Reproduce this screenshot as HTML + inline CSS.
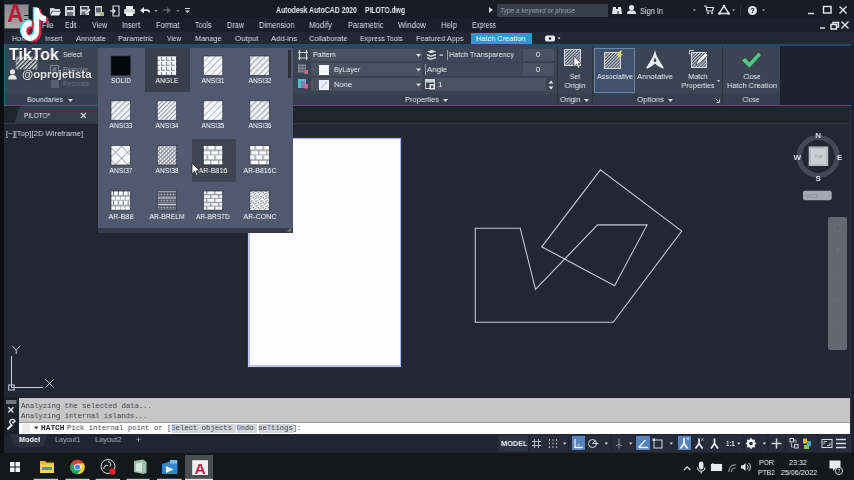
<!DOCTYPE html>
<html><head><meta charset="utf-8">
<style>
*{box-sizing:border-box;margin:0;padding:0}
html,body{width:854px;height:480px;overflow:hidden;background:#212733;font-family:"Liberation Sans",sans-serif;color:#dfe3ea}
body{position:relative}
.abs,.t,.c{position:absolute}
.t,.c{will-change:transform}
.t{white-space:nowrap;font-size:8px;line-height:10px;color:#d9dee7;height:10px}
.c{white-space:nowrap;font-size:8px;line-height:10px;color:#d9dee7;height:10px;transform:translateX(-50%);text-align:center}
#title{left:0;top:0;width:854px;height:18px;background:#181c25}
#menu{left:0;top:18px;width:854px;height:14px;background:#1b1f2a}
#tabs{left:0;top:32px;width:854px;height:13px;background:#222733}
#ribbon{left:0;top:45px;width:854px;height:61px;background:#1e222d}
.panel{position:absolute;top:46px;height:59px;background:#3b4453}
.ptitle{position:absolute;left:0;right:0;bottom:0;height:11px;background:#35404f}
#blueline{left:0;top:105px;width:854px;height:1px;background:#2d7ea6}
#filetabs{left:0;top:106px;width:854px;height:18px;background:#1f242d}
#draw{left:0;top:124px;width:854px;height:274px;background:#222733}
#cmd{left:0;top:397px;width:854px;height:37px;background:#1b2029}
#status{left:0;top:434px;width:854px;height:21px;background:#212532}
#task{left:0;top:452.500px;width:854px;height:27.500px;background:#131819}
.dd{position:absolute;height:12px;background:#4a5262}
.mono{font-family:"Liberation Mono",monospace}
</style></head><body>
<div id="title" class="abs"></div>
<div id="menu" class="abs"></div>
<div id="tabs" class="abs"></div>
<div id="ribbon" class="abs"></div>
<div id="filetabs" class="abs"></div>
<div id="draw" class="abs"></div>
<div id="cmd" class="abs"></div>
<div id="status" class="abs"></div>
<div id="task" class="abs"></div>
<!-- title bar -->
<div class="abs" style="left:0;top:0;width:3.500px;height:124px;background:#0c0e13"></div>
<div class="abs" style="left:4px;top:4px;width:25px;height:25px;background:linear-gradient(#87898c,#a8aaab);border:1px solid #55585d"></div>
<div class="t" style="transform:scaleX(0.913);transform-origin:0 50%;left:7.300px;top:0;height:26px;font-size:25px;line-height:26px;font-weight:bold;color:#b81d2e">A</div>
<svg class="abs" style="left:24px;top:14px" width="5" height="8" viewBox="0 0 5 8"><path d="M0 5h5L2.5 8z" fill="#222"/><rect x="0" y="1" width="5" height="1" fill="#222"/></svg>
<!-- quick access icons -->
<svg class="abs" style="left:48px;top:4px" width="150" height="14" viewBox="48 4 150 14">
 <g fill="#cfd3da">
  <path d="M50 8h4l1 1h5v2h-8l-2 4z"/><path d="M52.500 11.500h8.500l-2 4h-8.500z" fill="#e9ecf0"/>
  <path d="M65 6h10v10h-10z"/><rect x="67" y="7" width="6" height="3" fill="#3a404c"/><rect x="67" y="12" width="6" height="4" fill="#6c7280"/>
  <path d="M80 6h9v9h-9z"/><rect x="81.500" y="7" width="6" height="2.500" fill="#3a404c"/><rect x="81.500" y="11.500" width="4" height="3.500" fill="#6c7280"/><path d="M84.500 14.500l.6-2.200 4-4 1.600 1.600-4 4z" fill="#f1f3f6" stroke="#191d27" stroke-width=".5"/>
  <path d="M95 6h7v10h-7z"/><rect x="96" y="7.500" width="5" height="5" fill="#586070"/><path d="M100 12h4v4h-4z" fill="#a9b87a"/>
  <path d="M113 6h6v10h-6z" fill="none" stroke="#cfd3da" stroke-width="1.200"/><path d="M110 11h5m-2-2l2 2-2 2" stroke="#e8ebef" stroke-width="1.200" fill="none"/>
  <rect x="124" y="9" width="11" height="5" rx="1"/><rect x="126" y="6" width="7" height="3" fill="#e9ecf0"/><rect x="126" y="12.500" width="7" height="3.500" fill="#f4f5f7"/>
  <path d="M140 10.500l4-3.500v2.300h3c2 0 3 1.200 3 3.200h-1.500c0-1-.6-1.600-1.700-1.600H144v2.700z" fill="#e4e7ec"/>
  <path d="M154.500 10h3l-1.500 2z" fill="#aeb3bd"/>
  <path d="M171 10.500l-4-3.500v2.300h-3c-1 0-1.500.5-1.500 1.200h4.500v3z" fill="#5b6270"/>
  <path d="M176.500 10h3l-1.500 2z" fill="#7b818d"/>
  <rect x="185" y="8" width="5" height="1"/><path d="M185 10.500h5l-2.500 2.500z"/>
 </g>
</svg>
<div class="t" style="transform:scaleX(0.811);transform-origin:0 50%;left:276px;top:5px;font-size:8.500px;color:#e6e9ee;font-weight:bold">Autodesk AutoCAD 2020</div>
<div class="t" style="transform:scaleX(0.787);transform-origin:0 50%;left:365px;top:5px;font-size:8.500px;color:#e6e9ee;font-weight:bold">PILOTO.dwg</div>
<svg class="abs" style="left:489px;top:7px" width="4" height="6"><path d="M0 0l4 3-4 3z" fill="#d0d4db"/></svg>
<div class="abs" style="left:497px;top:4px;width:111px;height:13px;background:#373e4c"></div>
<div class="t" style="transform:scaleX(0.871);transform-origin:0 50%;left:500px;top:5.500px;font-size:7.500px;font-style:italic;color:#9aa0ac">Type a keyword or phrase</div>
<svg class="abs" style="left:610px;top:3px" width="160" height="14" viewBox="610 3 160 14">
 <g fill="#dfe3e9">
  <path d="M613 7h3v2h2V7h3l1 7h-3.500v-3h-1v3H612z"/>
  <circle cx="631.500" cy="7.500" r="2.600"/><path d="M627 14c0-3 2-3.800 4.500-3.800s4.500.8 4.500 3.800z"/>
  <path d="M693 9.500h3l-1.500 1.800z" fill="#b0b5bf"/>
  <path d="M704 6h2l1 5h5.500l1-3.500H707" fill="none" stroke="#dfe3e9" stroke-width="1.200"/><circle cx="708" cy="13" r="1"/><circle cx="712" cy="13" r="1"/>
  <path d="M724 6l5 7.500h-10z" fill="none" stroke="#dfe3e9" stroke-width="1.400"/><circle cx="724" cy="6" r="1.300"/><circle cx="719.500" cy="13.500" r="1.300"/><circle cx="728.500" cy="13.500" r="1.300"/>
  <path d="M732 9.500h3l-1.500 1.800z" fill="#b0b5bf"/>
  <rect x="740" y="5" width="1" height="11" fill="#2c323e"/>
  <circle cx="752.500" cy="10.500" r="4.500"/>
  <path d="M762 9.500h3l-1.500 1.800z" fill="#b0b5bf"/>
 </g>
 <text x="752.500" y="13.200" font-size="7.500" font-weight="bold" text-anchor="middle" fill="#12151c" font-family="Liberation Sans, sans-serif">?</text>
</svg>
<div class="t" style="transform:scaleX(0.869);transform-origin:0 50%;left:640px;top:5.500px;font-size:8.500px;color:#e2e5ea">Sign In</div>
<svg class="abs" style="left:805px;top:3px" width="49" height="28" viewBox="805 3 49 28">
 <g stroke="#e4e7ec" stroke-width="1.400" fill="none">
  <path d="M808 13.500h6"/><rect x="823.500" y="6.500" width="7.500" height="6.500"/><path d="M839.500 6.500l7 7m0-7l-7 7"/>
  <path d="M820 28h5"/><path d="M831 24.500h5.500v4.500h-5.500zM833 24.500v-2h5.500v4.500h-2"/><path d="M841.500 21.500l7 7m0-7l-7 7"/>
 </g>
</svg>
<!-- menu bar -->
<div class="t" style="transform:scaleX(0.839);transform-origin:0 50%;left:42.0px;top:20px;font-size:8.500px">File</div>
<div class="t" style="transform:scaleX(0.785);transform-origin:0 50%;left:64.5px;top:20px;font-size:8.500px">Edit</div>
<div class="t" style="transform:scaleX(0.821);transform-origin:0 50%;left:92.0px;top:20px;font-size:8.500px">View</div>
<div class="t" style="transform:scaleX(0.846);transform-origin:0 50%;left:122.0px;top:20px;font-size:8.500px">Insert</div>
<div class="t" style="transform:scaleX(0.873);transform-origin:0 50%;left:155.5px;top:20px;font-size:8.500px">Format</div>
<div class="t" style="transform:scaleX(0.831);transform-origin:0 50%;left:194.5px;top:20px;font-size:8.500px">Tools</div>
<div class="t" style="transform:scaleX(0.857);transform-origin:0 50%;left:227.0px;top:20px;font-size:8.500px">Draw</div>
<div class="t" style="transform:scaleX(0.884);transform-origin:0 50%;left:258.5px;top:20px;font-size:8.500px">Dimension</div>
<div class="t" style="transform:scaleX(0.918);transform-origin:0 50%;left:309.0px;top:20px;font-size:8.500px">Modify</div>
<div class="t" style="transform:scaleX(0.864);transform-origin:0 50%;left:347.5px;top:20px;font-size:8.500px">Parametric</div>
<div class="t" style="transform:scaleX(0.926);transform-origin:0 50%;left:398.0px;top:20px;font-size:8.500px">Window</div>
<div class="t" style="transform:scaleX(0.915);transform-origin:0 50%;left:441.0px;top:20px;font-size:8.500px">Help</div>
<div class="t" style="transform:scaleX(0.781);transform-origin:0 50%;left:472.0px;top:20px;font-size:8.500px">Express</div>
<!-- ribbon tabs -->
<div class="t" style="transform:scaleX(0.890);transform-origin:0 50%;left:12.0px;top:33.500px">Home</div>
<div class="t" style="transform:scaleX(0.874);transform-origin:0 50%;left:45.0px;top:33.500px">Insert</div>
<div class="t" style="transform:scaleX(0.937);transform-origin:0 50%;left:76.0px;top:33.500px">Annotate</div>
<div class="t" style="transform:scaleX(0.905);transform-origin:0 50%;left:118.0px;top:33.500px">Parametric</div>
<div class="t" style="transform:scaleX(0.814);transform-origin:0 50%;left:167.0px;top:33.500px">View</div>
<div class="t" style="transform:scaleX(0.916);transform-origin:0 50%;left:194.5px;top:33.500px">Manage</div>
<div class="t" style="transform:scaleX(0.979);transform-origin:0 50%;left:234.5px;top:33.500px">Output</div>
<div class="t" style="transform:scaleX(0.959);transform-origin:0 50%;left:271.0px;top:33.500px">Add-ins</div>
<div class="t" style="transform:scaleX(0.941);transform-origin:0 50%;left:309.0px;top:33.500px">Collaborate</div>
<div class="t" style="transform:scaleX(0.856);transform-origin:0 50%;left:360.0px;top:33.500px">Express Tools</div>
<div class="t" style="transform:scaleX(0.913);transform-origin:0 50%;left:415.5px;top:33.500px">Featured Apps</div>
<div class="abs" style="left:471px;top:33px;width:61px;height:12px;background:#2b99d4"></div>
<div class="t" style="transform:scaleX(0.928);transform-origin:0 50%;left:475.500px;top:33.500px;color:#fff">Hatch Creation</div>
<svg class="abs" style="left:545px;top:35px" width="18" height="8"><rect x="0" y="0.500" width="10" height="6" rx="2" fill="#e8ebef"/><circle cx="5" cy="3.500" r="1.300" fill="#1f2531"/><path d="M12.500 2.500h3l-1.500 2z" fill="#d0d4db"/></svg>

<!-- ribbon teal top line -->
<div class="abs" style="left:4px;top:44px;width:847px;height:1.600px;background:#1f4d65"></div>
<div class="abs" style="left:4px;top:46px;width:775.500px;height:59px;background:#2c3441"></div>
<!-- Boundaries panel -->
<div class="panel" style="left:4px;width:94px"><div class="ptitle"></div></div>
<div class="abs" style="left:4px;top:45px;width:1px;height:61px;background:#2a6680"></div>
<svg class="abs" style="left:14px;top:54.500px" width="26" height="16" viewBox="0 0 26 16">
 <defs><pattern id="hp1" width="3" height="3" patternUnits="userSpaceOnUse" patternTransform="rotate(45)"><rect width="3" height="3" fill="#cfd3da"/><rect width="1.300" height="3" fill="#2b303a"/></pattern></defs>
 <rect x="2" y="2" width="21" height="12" fill="url(#hp1)"/><rect x="2" y="2" width="21" height="12" fill="none" stroke="#8b919c" stroke-dasharray="2 1"/>
</svg>
<div class="t" style="transform:scaleX(0.855);transform-origin:0 50%;left:62.500px;top:50px;color:#e8ebf0">Select</div>

<svg class="abs" style="left:49px;top:64px" width="12" height="26" viewBox="0 0 12 26"><rect x="1.500" y="1.500" width="8" height="8" fill="none" stroke="#7f8693"/><rect x="3.500" y="3.500" width="4" height="4" fill="#6d7481"/><rect x="2" y="16" width="8" height="8" fill="#596070"/></svg>
<div class="t" style="transform:scaleX(0.839);transform-origin:0 50%;left:62.500px;top:65px;color:#8e95a2">Remove</div>
<div class="t" style="transform:scaleX(0.832);transform-origin:0 50%;left:62.500px;top:79px;color:#6a7180">Recreate</div>
<div class="t" style="transform:scaleX(0.889);transform-origin:0 50%;left:27px;top:95px;color:#dfe3ea">Boundaries</div>
<svg class="abs" style="left:67.500px;top:98.500px" width="5" height="3"><path d="M0 0h5L2.500 3z" fill="#d5d9e0"/></svg>
<!-- Pattern panel (mostly hidden by dropdown) -->
<div class="panel" style="left:99px;width:193px"><div class="ptitle"></div></div>
<!-- Properties panel -->
<div class="panel" style="left:293px;width:264px"><div class="ptitle"></div></div>
<svg class="abs" style="left:297px;top:49px" width="12" height="42" viewBox="0 0 12 42">
 <path d="M2.500 1v10M9.500 1v10M1 3.500h10M1 9h10" stroke="#d4d8df" stroke-width="1.200" fill="none"/>
 <rect x="1" y="15.500" width="8" height="8" fill="#8e949f"/><path d="M1 18h8M1 21h8M4 15.500v8M7 15.500v8" stroke="#4b5160" stroke-width=".8"/><rect x="7.500" y="21" width="3.500" height="4" fill="#c76a86"/>
 <rect x="1" y="30" width="8" height="9" fill="#5fb7cc"/><rect x="4" y="32" width="4" height="7" fill="#8a7ab8"/><rect x="7.500" y="35" width="3.500" height="4.500" fill="#c76a86"/>
</svg>
<div class="dd" style="left:311px;top:49px;width:111px"></div>
<div class="dd" style="left:311px;top:63px;width:111px;height:13px"></div>
<div class="dd" style="left:311px;top:78px;width:111px;height:13px"></div>
<div class="t" style="transform:scaleX(0.892);transform-origin:0 50%;left:313px;top:50px;color:#e8ebf0">Pattern</div>
<div class="abs" style="left:318.500px;top:65px;width:10px;height:10px;background:#f4f6fb"></div>
<div class="abs" style="left:318.500px;top:80px;width:10px;height:10px;background:#eceef8"></div>
<svg class="abs" style="left:318.500px;top:80px" width="10" height="10"><path d="M2 8l6-6" stroke="#c9cde6" stroke-width="1.200"/></svg>
<div class="t" style="transform:scaleX(0.886);transform-origin:0 50%;left:334px;top:64.500px;color:#e8ebf0">ByLayer</div>
<div class="t" style="transform:scaleX(0.941);transform-origin:0 50%;left:334px;top:79.500px;color:#e8ebf0">None</div>
<svg class="abs" style="left:415px;top:49px" width="8" height="42" viewBox="0 0 8 42"><g fill="#d9dde4"><path d="M1 5h5L3.500 8z"/><path d="M1 19.500h5L3.500 22.500z"/><path d="M1 34.500h5L3.500 37.500z"/></g></svg>
<!-- right half of properties -->
<svg class="abs" style="left:425px;top:49px" width="20" height="12" viewBox="0 0 20 12"><g fill="#dfe3e9"><path d="M2 2.500l5-1.500 4 1.500-5 1.800z"/><path d="M2 5l4 1.500 5-1.800v1.500l-5 1.800-4-1.500z"/><path d="M2 8l4 1.500 5-1.800v1.500l-5 1.800-4-1.500z"/><rect x="14.500" y="5.500" width="3.500" height="1.200"/></g></svg>
<div class="dd" style="left:446.500px;top:49px;width:75px;background:#3f4858"></div>
<div class="dd" style="left:523px;top:49px;width:31px"></div>
<div class="abs" style="left:446.500px;top:50px;width:1px;height:10px;background:#9aa1ad"></div>
<div class="t" style="transform:scaleX(0.908);transform-origin:0 50%;left:449px;top:50px;color:#e8ebf0">Hatch Transparency</div>
<div class="c" style="left:538px;top:50px;color:#e8ebf0">0</div>
<div class="dd" style="left:424.500px;top:63px;width:97px;height:13px;background:#3f4858"></div>
<div class="dd" style="left:523px;top:63px;width:31px;height:13px"></div>
<div class="abs" style="left:424.500px;top:64px;width:1px;height:11px;background:#9aa1ad"></div>
<div class="t" style="transform:scaleX(0.977);transform-origin:0 50%;left:427px;top:64.500px;color:#e8ebf0">Angle</div>
<div class="c" style="left:538px;top:64.500px;color:#e8ebf0">0</div>
<div class="dd" style="left:435px;top:78px;width:111px;height:13px"></div>
<svg class="abs" style="left:424.500px;top:79px" width="11" height="11" viewBox="0 0 11 11"><rect x=".5" y=".5" width="9" height="9" fill="none" stroke="#cfd3da"/><rect x="1" y="1" width="8" height="2.500" fill="#cfd3da"/><rect x="4.500" y="5" width="5.500" height="5.500" fill="#e9ecf0"/><rect x="6" y="6.500" width="2.500" height="2.500" fill="#4a5262"/></svg>
<div class="t" style="left:438px;top:79.500px;color:#e8ebf0">1</div>
<svg class="abs" style="left:548px;top:79px" width="6" height="12" viewBox="0 0 6 12"><path d="M.5 4.500h5L3 1.500zM.5 7.500h5L3 10.500z" fill="#e3e6eb"/></svg>
<div class="t" style="transform:scaleX(0.932);transform-origin:0 50%;left:405px;top:95px;color:#dfe3ea">Properties</div>
<svg class="abs" style="left:442.500px;top:98.500px" width="5" height="3"><path d="M0 0h5L2.500 3z" fill="#d5d9e0"/></svg>
<!-- Origin panel -->
<div class="panel" style="left:558px;width:33.500px"><div class="ptitle"></div></div>
<svg class="abs" style="left:563px;top:48px" width="22" height="22" viewBox="0 0 22 22">
 <defs><pattern id="hp2" width="2.200" height="2.200" patternUnits="userSpaceOnUse" patternTransform="rotate(45)"><rect width="2.200" height="2.200" fill="#4a5261"/><rect width="1.100" height="2.200" fill="#c3c8d0"/></pattern></defs>
 <rect x="1.500" y="1.500" width="16" height="16" fill="url(#hp2)" stroke="#d4d8df"/>
 <path d="M11 8.500v10l2.500-2.300 1.800 4 1.700-.8-1.800-3.800 3.300-.2z" fill="#fff" stroke="#2a2f3a" stroke-width=".6"/>
</svg>
<div class="c" style="transform:translateX(-50%) scaleX(0.874);left:574.500px;top:71.500px;color:#e8ebf0">Set</div>
<div class="c" style="transform:translateX(-50%) scaleX(0.984);left:574.500px;top:81px;color:#e8ebf0">Origin</div>
<div class="t" style="transform:scaleX(0.960);transform-origin:0 50%;left:559.500px;top:95px;color:#dfe3ea">Origin</div>
<svg class="abs" style="left:584px;top:98.500px" width="5" height="3"><path d="M0 0h5L2.500 3z" fill="#d5d9e0"/></svg>
<!-- Options panel -->
<div class="panel" style="left:592.500px;width:129.500px"><div class="ptitle"></div></div>
<div class="abs" style="left:594px;top:47.500px;width:41px;height:45px;background:#42526c;border:1px solid #6985a8"></div>
<svg class="abs" style="left:603px;top:49.500px" width="24" height="22" viewBox="0 0 24 22">
 <rect x="1.500" y="2.500" width="16" height="16" fill="url(#hp2)" stroke="#d4d8df"/>
 <path d="M17.500 .5l-4.500 5h2.800l-2.300 4 6.500-5.500h-3l2.500-3.500z" fill="#dbe65a"/>
</svg>
<div class="c" style="transform:translateX(-50%) scaleX(0.890);left:614.500px;top:71.500px;color:#e8ebf0">Associative</div>
<svg class="abs" style="left:644px;top:48px" width="22" height="22" viewBox="0 0 22 22"><path d="M11 2c.8 3.500 1.800 6 3.300 8.700 1.500 2.700 3.300 5.500 5.400 8.800l-.6 1.200c-3-1.200-5.600-2.800-8.100-5.200-2.500 2.400-5.100 4-8.100 5.200l-.6-1.200c2.100-3.300 3.900-6.100 5.400-8.800C9.200 8 10.200 5.500 11 2z" fill="#e9ecf0"/><path d="M11 9.500l1.600 3.300-1.600 1.700-1.600-1.700z" fill="#3b4453"/></svg>
<div class="c" style="transform:translateX(-50%) scaleX(0.952);left:655px;top:71.500px;color:#e8ebf0">Annotative</div>
<svg class="abs" style="left:687.500px;top:49px" width="22" height="22" viewBox="0 0 22 22">
 <rect x="3.500" y="3.500" width="15" height="15" fill="url(#hp2)" stroke="#d4d8df"/>
 <path d="M1.500 1.500v4M1.500 1.500h4" stroke="#d4d8df" fill="none"/>
 <path d="M8 16l2-5 7.500-7.500 2.500 2.500-7.500 7.500z" fill="#f1f2f5" stroke="#3b4453" stroke-width=".7"/>
</svg>
<div class="c" style="transform:translateX(-50%) scaleX(0.895);left:698px;top:71.500px;color:#e8ebf0">Match</div>
<div class="c" style="transform:translateX(-50%) scaleX(0.905);left:698px;top:81px;color:#e8ebf0">Properties</div>
<svg class="abs" style="left:716.500px;top:80px" width="3" height="3"><path d="M0 0h3L1.500 2z" fill="#d5d9e0"/></svg>
<div class="t" style="transform:scaleX(0.979);transform-origin:0 50%;left:637px;top:95px;color:#dfe3ea">Options</div>
<svg class="abs" style="left:667.500px;top:98.500px" width="5" height="3"><path d="M0 0h5L2.500 3z" fill="#d5d9e0"/></svg>
<svg class="abs" style="left:715px;top:97.500px" width="5" height="5"><path d="M.5 .5l3 3M4.500 1.500v3h-3" stroke="#c9cdd5" fill="none" stroke-width=".9"/></svg>
<!-- Close panel -->
<div class="panel" style="left:723px;width:56.500px"><div class="ptitle"></div></div>
<svg class="abs" style="left:740px;top:51px" width="23" height="18" viewBox="0 0 23 18"><path d="M2 9.500l3-2.500 4.500 4.500L18.500 1.500l2.500 2.500-11.500 12.500z" fill="#52cc83"/></svg>
<div class="c" style="transform:translateX(-50%) scaleX(0.831);left:751.500px;top:71.500px;color:#e8ebf0">Close</div>
<div class="c" style="transform:translateX(-50%) scaleX(0.937);left:751.500px;top:81px;color:#e8ebf0">Hatch Creation</div>
<div class="c" style="transform:translateX(-50%) scaleX(0.831);left:751px;top:95px;color:#dfe3ea">Close</div>
<!-- bright line under ribbon -->
<div class="abs" style="left:4px;top:105px;width:847px;height:1.200px;background:#286488"></div>
<!-- file tab -->
<svg class="abs" style="left:4px;top:106px;width:94px;height:18px" viewBox="0 0 94 18"><path d="M9 18c4 0 4-18 9-18h76v18z" fill="#353c4a"/></svg>
<div class="t" style="transform:scaleX(0.805);transform-origin:0 50%;left:24px;top:110.500px;color:#e3e6eb">PILOTO*</div>
<svg class="abs" style="left:80px;top:112px" width="7" height="7"><path d="M1 1l5 5M6 1l-5 5" stroke="#d5d9e0" stroke-width="1.100"/></svg>
<div class="abs" style="left:3.500px;top:123px;width:847px;height:1.300px;background:#323844"></div>

<!-- drawing area -->
<div class="abs" style="left:0;top:124px;width:3.500px;height:273px;background:#0c0e13"></div>
<div class="abs" style="left:849.500px;top:106px;width:4.500px;height:346.500px;background:#1d222c;border-left:1px solid #2c323e"></div>
<div class="t" style="transform:scaleX(0.960);transform-origin:0 50%;left:6px;top:128.500px;color:#d5d9e0">[−][Top][2D Wireframe]</div>
<!-- white rect -->
<div class="abs" style="left:247.500px;top:138px;width:153px;height:228.500px;background:#fdfdff;border:1.200px solid #a9b5ea;border-left:2.500px solid #c0c9f1;border-bottom:2px solid #bcc8e6;box-shadow:0 0 0 .6px #343a78"></div>
<svg class="abs" style="left:0;top:124px" width="854" height="273" viewBox="0 124 854 273">
 <path d="M475.300 228.200H520.200L535.500 289.500L597.500 224.900H647.100L614.600 285.800L541.700 246.800L600.400 169.800L681.700 231.100L613.200 322.300H475.300Z" fill="none" stroke="#c3c7ce" stroke-width="1.100" stroke-linejoin="miter"/>
 <!-- UCS icon -->
 <g stroke="#c9cdd4" stroke-width="1" fill="none">
  <path d="M11.500 387.500V356M11.500 387.500H43"/><rect x="8.700" y="385" width="5.500" height="5"/>
  <path d="M45.500 379.300l8.200 8.200M53.700 379.300l-8.200 8.200"/>
  <path d="M12.200 345.700l4 4.500 4.100-4.500M16.200 350.200V354"/>
 </g>
 <!-- view cube -->
 <circle cx="818.200" cy="156.400" r="19" fill="none" stroke="#434955" stroke-width="5"/>
 <rect x="808.700" y="146.500" width="19.500" height="19.500" fill="#b9bcc3"/>
 <rect x="811" y="149" width="15" height="15" fill="#cbced4"/>
 <text x="818.500" y="158.200" font-size="4" text-anchor="middle" fill="#8a8e96" font-family="Liberation Sans, sans-serif">TOP</text>
 <g font-size="8" font-weight="bold" text-anchor="middle" fill="#dcdfe4" font-family="Liberation Sans, sans-serif">
  <text x="818.200" y="138">N</text><text x="818.200" y="180.600">S</text><text x="797.300" y="159.500">W</text><text x="839.600" y="159.500">E</text>
 </g>
 <rect x="803" y="190.800" width="28.700" height="9.500" rx="2" fill="#a3a7ae"/>
 <text x="812" y="198" font-size="5" text-anchor="middle" fill="#858991" font-family="Liberation Sans, sans-serif">WCS</text>
 <rect x="828" y="217" width="19" height="133" rx="2" fill="#63676f"/>
 <g stroke="#6b6f78" stroke-width="1" fill="none"><circle cx="837.500" cy="228" r="4"/><path d="M835 250l5 0M837.500 247v6M834 275h7M834 300h7M835 325h5"/></g>
</svg>

<!-- hatch pattern gallery dropdown -->
<div class="abs" style="left:97.500px;top:48px;width:195.500px;height:185.300px;background:#363c49"></div><div class="abs" style="left:97.500px;top:48px;width:195.500px;height:179.500px;background:#515970"></div>
<div class="abs" style="left:145px;top:48px;width:44.500px;height:43.700px;background:#3a3f4d"></div>
<div class="abs" style="left:192px;top:138.500px;width:43.500px;height:43.500px;background:#3e4452"></div>
<div class="abs" style="left:288px;top:49.500px;width:3px;height:28px;background:#2a2f3a"></div>
<svg class="abs" style="left:98px;top:47px" width="195" height="186" viewBox="98 47 195 186">
 <defs>
  <pattern id="p31" width="4.800" height="4.800" patternUnits="userSpaceOnUse" patternTransform="rotate(45)"><rect width="4.800" height="4.800" fill="#f6f7fb"/><rect width=".6" height="4.800" fill="#8a909c"/></pattern>
  <pattern id="p32" width="4.200" height="4.200" patternUnits="userSpaceOnUse" patternTransform="rotate(45)"><rect width="4.200" height="4.200" fill="#f1f3f7"/><rect width=".6" height="4.200" fill="#858b98"/><rect x="1.300" width=".5" height="4.200" fill="#b3b8c2"/></pattern>
  <pattern id="p34" width="3" height="3" patternUnits="userSpaceOnUse" patternTransform="rotate(45)"><rect width="3" height="3" fill="#eef0f4"/><rect width=".8" height="3" fill="#7f8693"/></pattern>
  <pattern id="p37" width="8.500" height="8.500" patternUnits="userSpaceOnUse" patternTransform="rotate(45)" x="2"><rect width="8.500" height="8.500" fill="#f4f6fa"/><rect width=".6" height="8.500" fill="#858c99"/><rect width="8.500" height=".6" fill="#858c99"/></pattern>
  <pattern id="p38" width="2.800" height="2.800" patternUnits="userSpaceOnUse" patternTransform="rotate(45)"><rect width="2.800" height="2.800" fill="#eceef2"/><rect width=".8" height="2.800" fill="#666d7b"/><rect width="2.800" height=".7" fill="#7b828f"/></pattern>
  <pattern id="pang" width="5" height="5" patternUnits="userSpaceOnUse" x="1" y="1"><rect width="5" height="5" fill="#f4f5f9"/><rect x="0" y="3.800" width="3.600" height="1" fill="#7d8390"/><rect x="0" y="1" width="1" height="3.600" fill="#7d8390"/></pattern>
  <pattern id="pb816" width="8" height="9.750" patternUnits="userSpaceOnUse" x="203.300" y="145.500"><rect width="8" height="9.750" fill="#fafbfd"/><rect y="4.400" width="8" height=".9" fill="#5b6271"/><rect y="9.300" width="8" height=".9" fill="#5b6271"/><rect x="3.500" y="0" width=".9" height="4.400" fill="#5b6271"/><rect x="7.300" y="5" width=".9" height="4.400" fill="#5b6271"/></pattern>
  <pattern id="pb88" width="4.900" height="9.750" patternUnits="userSpaceOnUse" x="111" y="191"><rect width="4.900" height="9.750" fill="#fafbfd"/><rect y="4.400" width="4.900" height=".9" fill="#5b6271"/><rect y="9.300" width="4.900" height=".9" fill="#5b6271"/><rect x="2" y="0" width=".9" height="4.400" fill="#5b6271"/><rect x="4.400" y="5" width=".9" height="4.400" fill="#5b6271"/></pattern><pattern id="pbrstd" width="8" height="7.800" patternUnits="userSpaceOnUse" x="203.300" y="191"><rect width="8" height="7.800" fill="#f4f5f9"/><rect y="3.300" width="8" height=".8" fill="#5b6271"/><rect y="7.200" width="8" height=".8" fill="#5b6271"/><rect x="3" y="0" width=".8" height="3.300" fill="#5b6271"/><rect x="7" y="4" width=".8" height="3.300" fill="#5b6271"/></pattern>
  <pattern id="pbrelm" width="3" height="6.500" patternUnits="userSpaceOnUse" x="157.200" y="191"><rect width="3" height="6.500" fill="#3d4350"/><rect y="0" width="3" height="1.200" fill="#dfe2e8"/><rect x=".5" y="2.500" width="1.700" height="1.500" fill="#c9cdd5"/><rect y="5" width="3" height=".8" fill="#aeb3bd"/></pattern>
  <pattern id="pconc" width="5" height="5" patternUnits="userSpaceOnUse"><rect width="5" height="5" fill="#f1f2f6"/><rect x=".5" y=".6" width="1.100" height="1.100" fill="#555b69"/><rect x="2.800" y="2.300" width="1.100" height="1" fill="#555b69"/><rect x="2.400" y=".2" width=".9" height=".9" fill="#747a87"/><rect x=".3" y="3" width="1" height="1" fill="#747a87"/><rect x="4" y="3.900" width=".8" height=".8" fill="#555b69"/><rect x="1.600" y="1.900" width=".7" height=".7" fill="#8a909b"/></pattern>
 </defs>
 <!-- row 1 -->
 <rect x="111" y="56" width="19.500" height="19.500" fill="#05070c" stroke="#2c313c" stroke-width=".7"/>
 <rect x="157.200" y="56" width="19.500" height="19.500" fill="url(#pang)" stroke="#2c313c" stroke-width=".7"/>
 <rect x="203.300" y="56" width="19.500" height="19.500" fill="url(#p31)" stroke="#2c313c" stroke-width=".7"/>
 <rect x="249.800" y="56" width="19.500" height="19.500" fill="url(#p32)" stroke="#2c313c" stroke-width=".7"/>
 <!-- row 2 -->
 <rect x="111" y="100.800" width="19.500" height="19.500" fill="url(#p32)" stroke="#2c313c" stroke-width=".7"/>
 <rect x="157.200" y="100.800" width="19.500" height="19.500" fill="url(#p34)" stroke="#2c313c" stroke-width=".7"/>
 <rect x="203.300" y="100.800" width="19.500" height="19.500" fill="url(#p31)" stroke="#2c313c" stroke-width=".7"/>
 <rect x="249.800" y="100.800" width="19.500" height="19.500" fill="url(#p32)" stroke="#2c313c" stroke-width=".7"/>
 <!-- row 3 -->
 <rect x="111" y="145.500" width="19.500" height="19.500" fill="url(#p37)" stroke="#2c313c" stroke-width=".7"/>
 <rect x="157.200" y="145.500" width="19.500" height="19.500" fill="url(#p38)" stroke="#2c313c" stroke-width=".7"/>
 <rect x="203.300" y="145.500" width="19.500" height="19.500" fill="url(#pb816)" stroke="#2c313c" stroke-width=".7"/>
 <rect x="249.800" y="145.500" width="19.500" height="19.500" fill="url(#pb816)" stroke="#2c313c" stroke-width=".7"/>
 <!-- row 4 -->
 <rect x="111" y="191" width="19.500" height="19.500" fill="url(#pb88)" stroke="#2c313c" stroke-width=".7"/>
 <rect x="157.200" y="191" width="19.500" height="19.500" fill="url(#pbrelm)" stroke="#2c313c" stroke-width=".7"/>
 <rect x="203.300" y="191" width="19.500" height="19.500" fill="url(#pbrstd)" stroke="#2c313c" stroke-width=".7"/>
 <rect x="249.800" y="191" width="19.500" height="19.500" fill="url(#pconc)" stroke="#2c313c" stroke-width=".7"/>
 <!-- resize grip -->
 <path d="M288 231.500l3-3M290 231.500l1-1" stroke="#d0d4db" stroke-width=".8"/>
</svg>
<div class="c" style="transform:translateX(-50%) scaleX(0.833);left:120.500px;top:76px;color:#fbfcfd">SOLID</div>
<div class="c" style="transform:translateX(-50%) scaleX(0.848);left:167px;top:76px;color:#fbfcfd">ANGLE</div>
<div class="c" style="transform:translateX(-50%) scaleX(0.834);left:213px;top:76px;color:#fbfcfd">ANSI31</div>
<div class="c" style="transform:translateX(-50%) scaleX(0.834);left:259.500px;top:76px;color:#fbfcfd">ANSI32</div>
<div class="c" style="transform:translateX(-50%) scaleX(0.834);left:120.500px;top:121px;color:#fbfcfd">ANSI33</div>
<div class="c" style="transform:translateX(-50%) scaleX(0.834);left:167px;top:121px;color:#fbfcfd">ANSI34</div>
<div class="c" style="transform:translateX(-50%) scaleX(0.834);left:213px;top:121px;color:#fbfcfd">ANSI35</div>
<div class="c" style="transform:translateX(-50%) scaleX(0.834);left:259.500px;top:121px;color:#fbfcfd">ANSI36</div>
<div class="c" style="transform:translateX(-50%) scaleX(0.834);left:120.500px;top:166px;color:#fbfcfd">ANSI37</div>
<div class="c" style="transform:translateX(-50%) scaleX(0.834);left:167px;top:166px;color:#fbfcfd">ANSI38</div>
<div class="c" style="transform:translateX(-50%) scaleX(0.893);left:213px;top:166px;color:#fbfcfd">AR-B816</div>
<div class="c" style="transform:translateX(-50%) scaleX(0.863);left:259.500px;top:166px;color:#fbfcfd">AR-B816C</div>
<div class="c" style="transform:translateX(-50%) scaleX(0.892);left:120.500px;top:211.500px;color:#fbfcfd">AR-B88</div>
<div class="c" style="transform:translateX(-50%) scaleX(0.847);left:167px;top:211.500px;color:#fbfcfd">AR-BRELM</div>
<div class="c" style="transform:translateX(-50%) scaleX(0.831);left:213px;top:211.500px;color:#fbfcfd">AR-BRSTD</div>
<div class="c" style="transform:translateX(-50%) scaleX(0.884);left:259.500px;top:211.500px;color:#fbfcfd">AR-CONC</div>
<!-- mouse cursor -->
<svg class="abs" style="left:191px;top:162px" width="10" height="15" viewBox="0 0 10 15"><path d="M1 1v11l2.600-2.400 1.800 4 1.600-.7-1.800-3.900 3.600-.2z" fill="#fff" stroke="#1a1d24" stroke-width=".8"/></svg>

<!-- command line -->
<div class="abs" style="left:0;top:397px;width:3.500px;height:55.500px;background:#0c0e13"></div>
<div class="abs" style="left:19px;top:398px;width:830.500px;height:24px;background:#c6c6c7"></div>
<div class="abs" style="left:19px;top:421.500px;width:830.500px;height:1px;background:#9a9b9e"></div>
<div class="abs" style="left:19px;top:422.500px;width:830.500px;height:11.500px;background:#fdfdfd"></div>
<svg class="abs" style="left:5px;top:398px" width="14" height="36" viewBox="0 0 14 36">
 <g fill="#c9cdd4"><rect x="1" y="2.500" width="10.500" height="1"/><rect x="1" y="4.500" width="10.500" height="1"/></g>
 <path d="M3.300 9.300l5.200 5.200M8.500 9.300l-5.200 5.200" stroke="#e4e7ec" stroke-width="1.300"/>
 <path d="M2.300 31.500l5-5" stroke="#e4e7ec" stroke-width="2"/><path d="M6.300 26.500a2.700 2.700 0 1 1 3.700-3.400l-1.800 1.700-1-.9" fill="none" stroke="#e4e7ec" stroke-width="1.400"/>
</svg>
<div class="t mono" style="transform:scaleX(0.970);transform-origin:0 50%;left:20.500px;top:401px;font-size:7.500px;color:#3e4148">Analyzing the selected data...</div>
<div class="t mono" style="transform:scaleX(0.969);transform-origin:0 50%;left:20.500px;top:410.500px;font-size:7.500px;color:#3e4148">Analyzing internal islands...</div>
<div class="abs" style="left:172px;top:423.500px;width:63.500px;height:9.500px;background:#d4d5dc"></div>
<div class="abs" style="left:237px;top:423.500px;width:19.500px;height:9.500px;background:#d4d5dc"></div>
<div class="abs" style="left:258.500px;top:423.500px;width:35.500px;height:9.500px;background:#d4d5dc"></div>
<div class="abs" style="left:21.500px;top:424px;width:8px;height:8.500px;background:#ececee"></div>
<svg class="abs" style="left:33.500px;top:426px" width="5" height="4"><path d="M0 .5h4.500L2.250 3.500z" fill="#3a3d45"/></svg>
<div class="t mono" style="transform:scaleX(1.044);transform-origin:0 50%;left:41px;top:423px;font-size:7.500px;color:#22252c;font-weight:bold">HATCH</div>
<div class="t mono" style="transform:scaleX(0.965);transform-origin:0 50%;left:67.400px;top:423px;font-size:7.500px;color:#3a3d45">Pick internal point or [<span style="color:#3c63c8">S</span>elect objects <span style="color:#3c63c8">U</span>ndo se<span style="color:#3c63c8">T</span>tings]:</div>

<!-- layout tabs + status bar -->
<svg class="abs" style="left:4px;top:434px" width="50" height="14"><path d="M6 0h38l-5 13H11z" fill="#2b313e"/></svg>
<div class="t" style="transform:scaleX(0.909);transform-origin:0 50%;left:18.800px;top:435px;color:#fff;font-weight:bold">Model</div>
<div class="t" style="transform:scaleX(0.896);transform-origin:0 50%;left:54.500px;top:435px;color:#aab0bb">Layout1</div>
<div class="t" style="transform:scaleX(0.931);transform-origin:0 50%;left:94.700px;top:435px;color:#aab0bb">Layout2</div>
<div class="t" style="left:135.500px;top:434.500px;color:#aab0bb;font-size:9px">+</div>
<div class="abs" style="left:498px;top:434.500px;width:352px;height:17px;background:#262c39"></div><div class="abs" style="left:499.500px;top:435.500px;width:28.500px;height:15px;background:#2d3442"></div>
<div class="abs" style="left:572px;top:436px;width:13px;height:14px;background:#5983bb"></div>
<div class="abs" style="left:636px;top:436px;width:14px;height:14px;background:#5983bb"></div>
<div class="abs" style="left:677.500px;top:436px;width:13px;height:14px;background:#5983bb"></div>
<div class="t" style="transform:scaleX(0.978);transform-origin:0 50%;left:500.700px;top:438.500px;color:#eef0f4;font-size:7.500px;font-weight:bold">MODEL</div>
<svg class="abs" style="left:498px;top:434px" width="356" height="18" viewBox="498 434 356 18">
 <g stroke="#d4d8df" stroke-width="1" fill="none">
  <path d="M534.500 439v9M538.500 439v9M532 441.500h9M532 445.500h9" stroke-width=".8"/>
  <path d="M549 440h1M552.500 440h1M556 440h1M549 443.500h1M552.500 443.500h1M556 443.500h1M549 447h1M552.500 447h1M556 447h1" stroke-width="1.300"/>
  <path d="M575 439v8.500h8" stroke="#f1f3f6" stroke-width="1.300"/><path d="M577.500 445h2" stroke="#f1f3f6"/>
  <circle cx="592.500" cy="443.500" r="4"/><path d="M592.500 443.500h6M592.500 443.500l3-3"/>
  <path d="M619 438.500v10M616 446l3-2 3 2" stroke="#8e95a2"/>
  <path d="M638.500 447.500h9.500M638.500 447.500l7-7.500" stroke="#f1f3f6" stroke-width="1.300"/>
  <rect x="654" y="440" width="8" height="8"/><rect x="652.500" y="438.500" width="2.500" height="2.500" fill="#d4d8df" stroke="none"/>
  <path d="M684 438v5.500M684 443.500l-3.500 5M684 443.500l3.500 5" stroke="#f6f7f9" stroke-width="1.800"/><path d="M688 437.500v2.500M686.800 438.700h2.400" stroke="#f6f7f9" stroke-width=".7"/>
  <path d="M699 438.500v5M699 443.500l-3.500 5M699 443.500l3.500 5" stroke="#eceef2" stroke-width="1.700"/><path d="M701 441l2.500-2.500M701.500 438.500l2 2" stroke-width=".8"/>
  <path d="M714.500 438.500v5M714.500 443.500l-3.500 5M714.500 443.500l3.500 5" stroke="#eceef2" stroke-width="1.700"/>
  <circle cx="751" cy="443.500" r="3" stroke-width="2.400" stroke="#f0f2f5"/><path d="M751 438.300v2M751 446.700v2M745.800 443.500h2M754.200 443.500h2M747.300 439.800l1.400 1.400M753.300 445.800l1.400 1.400M754.700 439.800l-1.400 1.400M748.700 445.800l-1.400 1.400" stroke-width="1.700" stroke="#f0f2f5"/>
  <path d="M776.500 438.500v10M771.500 443.500h10" stroke-width="1.500"/>
  <rect x="790" y="438.500" width="3.500" height="3.500"/><rect x="794.500" y="444.500" width="3.500" height="3.500"/><path d="M791.500 443v4h2M796 443v-3h-2" stroke-width=".8"/>
  <rect x="822" y="439.500" width="10" height="8"/><path d="M824 444.500v-3h3M830 442.500v3h-3" stroke-width=".9"/>
  <path d="M836 439.500h10M836 443.500h10M836 447.500h10" stroke-width="1.500"/>
 </g>
<g fill="#1b202a"><rect x="528.500" y="435" width="1" height="16"/><rect x="568" y="435" width="1" height="16"/><rect x="610.500" y="435" width="1" height="16"/><rect x="634.500" y="435" width="1" height="16"/><rect x="675" y="435" width="1" height="16"/><rect x="743.500" y="435" width="1" height="16"/><rect x="767.500" y="435" width="1" height="16"/><rect x="785" y="435" width="1" height="16"/><rect x="801.500" y="435" width="1" height="16"/><rect x="817.500" y="435" width="1" height="16"/></g>
 <g fill="#d4d8df"><path d="M563 442.500h3.500l-1.750 2.200z"/><path d="M604.500 442.500h3.500l-1.750 2.200z"/><path d="M629 442.500h3.500l-1.750 2.200z"/><path d="M669.500 442.500h3.500l-1.750 2.200z"/><path d="M737 442.500h3.500l-1.750 2.200z"/><path d="M762.500 442.500h3.500l-1.750 2.200z"/></g>
 <rect x="803" y="438.500" width="4" height="5" fill="#e4b43c"/><rect x="807" y="441" width="4" height="5" fill="#4ea3dc"/><rect x="804" y="445" width="5" height="4" fill="#8ac05a"/>
</svg>
<div class="t" style="transform:scaleX(0.784);transform-origin:0 50%;left:725.500px;top:438.500px;color:#e6e9ee;font-size:7.500px;font-weight:bold">1:1</div>

<!-- windows taskbar -->
<div class="abs" style="left:185px;top:455px;width:28px;height:25px;background:#4a4f50"></div>
<svg class="abs" style="left:0;top:452px" width="854" height="28" viewBox="0 452 854 28">
 <g fill="#f2f4f7"><rect x="10" y="462" width="4.500" height="4.500"/><rect x="15.500" y="462" width="4.500" height="4.500"/><rect x="10" y="467.500" width="4.500" height="4.500"/><rect x="15.500" y="467.500" width="4.500" height="4.500"/></g>
 <!-- explorer -->
 <path d="M40 461h5l1.500 1.500H54V473H40z" fill="#e9b63a"/><rect x="40" y="464.500" width="14" height="8.500" fill="#f6d569"/><rect x="42" y="467" width="10" height="3" fill="#4a90d6"/>
 <!-- chrome -->
 <circle cx="77.500" cy="467" r="7.300" fill="#db4437"/><path d="M77.500 467L71.200 463.400A7.300 7.300 0 0 0 77.500 474.300L81 468.500z" fill="#1da462"/><path d="M77.500 467l3.600 1.800-3.600 5.500a7.300 7.300 0 0 0 6.300-10.800H77.500z" fill="#ffcd40"/><circle cx="77.500" cy="467" r="3.300" fill="#fff"/><circle cx="77.500" cy="467" r="2.600" fill="#4285f4"/>
 <!-- obs-like -->
 <circle cx="108" cy="466.500" r="7" fill="#1b1d22" stroke="#d9dce1" stroke-width="1"/><path d="M108 461.500a3 3 0 0 1 2 5M104 469a3 3 0 0 1 4-3.500" stroke="#d9dce1" stroke-width="1" fill="none"/><circle cx="112.500" cy="471.500" r="3.200" fill="#e0202a"/>
 <!-- excel/doc -->
 <path d="M134 461l9-1.500 3.500 2.500v11l-3.500 1-9-2z" fill="#9dbfae"/><path d="M136 463.500l6-1v9.500l-6-1z" fill="#d8e6de"/>
 <!-- blue app -->
 <path d="M162 464l11-3.500h4.500V474H162z" fill="#2f87d0"/><path d="M166 466l7.500 3.500-7.500 3.500z" fill="#eaf3fb"/><rect x="170" y="460" width="7" height="3.500" fill="#7cc0f0"/>
 <!-- autocad -->
 <rect x="192.200" y="460.200" width="15.800" height="14.800" fill="#f3f1f2"/>
 <!-- underline bars -->
 <g fill="#c4d6d2"><rect x="33.700" y="478.800" width="24.300" height="1.200"/><rect x="65.400" y="478.800" width="24.300" height="1.200"/><rect x="95.600" y="478.800" width="24.400" height="1.200"/><rect x="126.600" y="478.800" width="23" height="1.200"/><rect x="157" y="478.800" width="24.800" height="1.200"/><rect x="185" y="478.800" width="28" height="1.200" fill="#dde8e6"/></g>
 <!-- tray -->
 <g stroke="#e8ebef" stroke-width="1.100" fill="none">
  <path d="M684 470l3.200-3.200 3.200 3.200"/>
  <rect x="699.500" y="462" width="3.400" height="7" rx="1.700" fill="#e8ebef"/><path d="M697.500 467.500a3.700 3.700 0 0 0 7.400 0M701.200 471.500v2"/>
  <rect x="711.500" y="464.500" width="10" height="6" fill="#e8ebef"/><path d="M713 463v2"/>
  <path d="M729 472a6 6 0 0 1 7-7" stroke="#8c919a"/><path d="M731.500 472a3.500 3.500 0 0 1 4-4" stroke="#8c919a"/>
  <path d="M741 465.500h2l2.500-2.500v8l-2.500-2.500h-2z" fill="#e8ebef" stroke="none"/><path d="M747 464.500a3.500 3.500 0 0 1 0 5M748.700 463a5.500 5.500 0 0 1 0 8" stroke-width=".9"/>
  <path d="M829.500 460.500h11v8h-5l-2.500 2.500v-2.500h-3.500z" fill="#e8ebef" stroke="none"/>
 </g>
 <circle cx="839" cy="471" r="3.600" fill="#0e1116" stroke="#e8ebef" stroke-width=".9"/>
 <text x="839" y="473.300" font-size="5.500" text-anchor="middle" fill="#e8ebef" font-family="Liberation Sans, sans-serif">7</text>
 <text x="200.100" y="473.800" font-size="15.500" font-weight="bold" text-anchor="middle" fill="#bd1f42" font-family="Liberation Sans, sans-serif">A</text>
</svg>
<div class="t" style="transform:scaleX(0.922);transform-origin:0 50%;left:758.500px;top:457.500px;color:#f0f2f5;font-size:7.500px">POR</div>
<div class="t" style="transform:scaleX(0.906);transform-origin:0 50%;left:758px;top:467.500px;color:#f0f2f5;font-size:7.500px">PTB2</div>
<div class="c" style="transform:translateX(-50%) scaleX(0.958);left:798px;top:457.500px;color:#f0f2f5;font-size:7.500px">23:32</div>
<div class="c" style="transform:translateX(-50%) scaleX(0.972);left:799px;top:467.500px;color:#f0f2f5;font-size:7.500px">25/06/2022</div>

<!-- tiktok watermark -->
<svg class="abs" style="left:18px;top:5px" width="32" height="40" viewBox="0 0 32 40">
 <defs><path id="tk" transform="translate(1.400,3) scale(1.190,1.375)" d="M12.525.02c1.310-.02 2.610-.01 3.910-.02.08 1.530.63 3.090 1.750 4.170 1.120 1.110 2.700 1.620 4.240 1.790v4.030c-1.440-.05-2.890-.35-4.200-.97-.57-.26-1.100-.59-1.620-.93-.01 2.920.01 5.840-.02 8.750-.08 1.400-.54 2.790-1.350 3.940-1.310 1.920-3.580 3.170-5.910 3.210-1.430.08-2.860-.31-4.080-1.030-2.020-1.190-3.440-3.370-3.650-5.710-.02-.5-.03-1-.01-1.490.18-1.900 1.120-3.720 2.580-4.960 1.660-1.440 3.980-2.130 6.150-1.720.02 1.480-.04 2.960-.04 4.440-.99-.32-2.150-.23-3.020.37-.63.41-1.110 1.040-1.360 1.750-.21.51-.15 1.070-.14 1.610.24 1.640 1.820 3.020 3.500 2.870 1.120-.01 2.190-.66 2.770-1.610.19-.33.4-.67.41-1.060.1-1.790.06-3.570.07-5.360.01-4.030-.01-8.050.02-12.070z"/></defs>
 <ellipse cx="13.500" cy="27.300" rx="5" ry="5.400" fill="#6a1630"/>
 <use href="#tk" fill="#35e0da" transform="translate(-1.500,-1)"/>
 <use href="#tk" fill="#e3264e" transform="translate(2.200,1.300)"/>
 <use href="#tk" fill="#ffffff"/>
</svg>
<div class="t" style="transform:scaleX(0.992);transform-origin:0 50%;left:8.800px;top:46.200px;height:18px;line-height:18px;font-size:16px;font-weight:bold;color:#fff;text-shadow:0 0 2px rgba(0,0,0,.35)">TikTok</div>
<svg class="abs" style="left:8px;top:68.500px" width="9" height="11" viewBox="0 0 9 11"><circle cx="4.500" cy="2.800" r="2.600" fill="#fff" fill-opacity=".88"/><path d="M.3 10.500c0-3.500 1.700-4.500 4.200-4.500s4.200 1 4.200 4.500z" fill="#fff" fill-opacity=".88"/></svg>
<div class="t" style="transform:scaleX(1.038);transform-origin:0 50%;left:21.800px;top:66.500px;height:15px;line-height:15px;font-size:11px;font-weight:bold;color:rgba(255,255,255,.86);text-shadow:0 0 2px rgba(0,0,0,.35)">@oprojetista</div>

</body></html>
